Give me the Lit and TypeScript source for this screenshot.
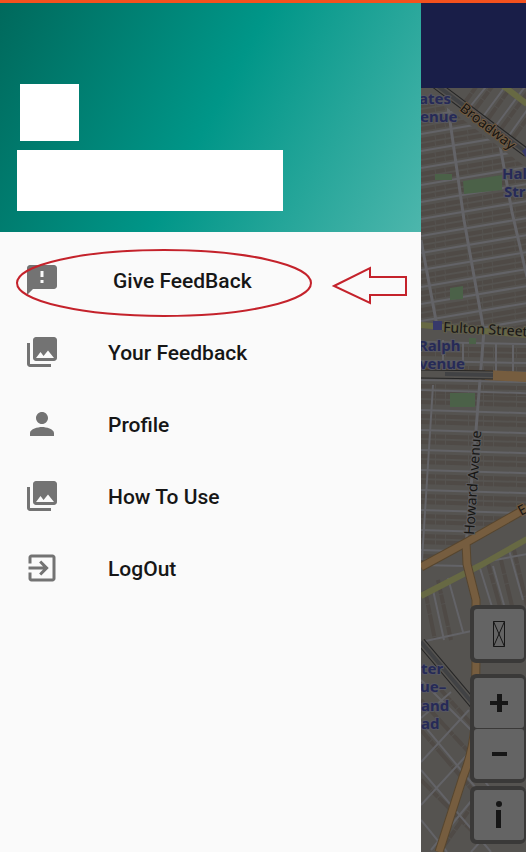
import { LitElement, html, svg, css } from "lit";
import { customElement } from "lit/decorators.js";

const icons = {
  feedback: "M20 2H4c-1.100 0-1.990.9-1.990 2L2 22l4-4h14c1.100 0 2-.9 2-2V4c0-1.100-.9-2-2-2zm-7 12h-2v-2h2v2zm0-4h-2V6h2v4z",
  gallery: "M22 16V4c0-1.100-.9-2-2-2H8c-1.100 0-2 .9-2 2v12c0 1.100.9 2 2 2h12c1.100 0 2-.9 2-2zm-11-4l2.030 2.710L16 11l4 5H8l3-4zM2 6v14c0 1.100.9 2 2 2h14v-2H4V6H2z",
  person: "M12 12c2.210 0 4-1.790 4-4s-1.790-4-4-4-4 1.790-4 4 1.790 4 4 4zm0 2c-2.670 0-8 1.340-8 4v2h16v-2c0-2.660-5.330-4-8-4z",
  exit: "M10.090 15.590L11.500 17l5-5-5-5-1.410 1.410L12.670 11H3v2h9.670l-2.580 2.590zM19 3H5c-1.110 0-2 .9-2 2v4h2V5h14v14H5v-4H3v4c0 1.100.89 2 2 2h14c1.100 0 2-.9 2-2V5c0-1.100-.9-2-2-2z",
};

const icon = (d: string) => html`<svg class="icon" viewBox="0 0 24 24" aria-hidden="true"><path d=${d} /></svg>`;

const items = [
  { label: "Your Feedback", icon: icons.gallery },
  { label: "Profile", icon: icons.person },
  { label: "How To Use", icon: icons.gallery },
  { label: "LogOut", icon: icons.exit },
];

// Rows of houses between the cross streets: start height, slope, street gap
const blocks = (top: number, bottom: number, step: number, slope: number) => {
  const out = [];
  for (let y = top; y < bottom; y += step) {
    const end = y + 106 * slope;
    out.push(svg`
      <path class="houses" d="M420 ${y + 6}L526 ${end + 6}M420 ${y + 12}L526 ${end + 12}" />
      <path class="street" d="M420 ${y}L526 ${end}" />`);
  }
  return out;
};

@customElement("street-map")
export class StreetMap extends LitElement {
  static styles = css`
    :host { display: block; overflow: hidden; background: #555350; }
    svg { display: block; width: 100%; height: 100%; }
    .land { fill: #555350; }
    .street { fill: none; stroke: #636367; stroke-width: 2; }
    .avenue { fill: none; stroke: #636367; stroke-width: 3; }
    .houses { fill: none; stroke: #4f4a46; stroke-width: 4; stroke-dasharray: 14 1 9 1 22 1; }
    .park { fill: #4b6148; }
    .orange-edge { fill: none; stroke: #57462f; stroke-width: 9; }
    .orange { fill: none; stroke: #765d3f; stroke-width: 7; }
    .wide { stroke-width: 10; }
    .green { fill: none; stroke: #676943; stroke-width: 6; }
    .rail { fill: none; stroke: #262626; stroke-width: 9; }
    .rail-fill { fill: none; stroke: #555350; stroke-width: 7; }
    .rail-core { fill: none; stroke: #414244; stroke-width: 4; }
    .station { fill: #37396a; }
    text { font-family: "Noto Sans", sans-serif; }
    .place { font-size: 15px; font-weight: 700; fill: #262a57; stroke: #57575f; stroke-width: 2; paint-order: stroke; }
    .road { font-size: 14px; fill: #171614; stroke: #605d4b; stroke-width: 2; paint-order: stroke; }
    .broadway { stroke: #715a40; }
    .howard { stroke: #5c5c5e; }
  `;

  render() {
    return html`
      <svg viewBox="420 88 106 764" preserveAspectRatio="xMinYMin slice" role="img" aria-label="Street map">
        <defs>
          <clipPath id="north"><path d="M420 88L526 168V332L420 325z" /></clipPath>
          <clipPath id="middle"><path d="M420 325L526 332V508L420 568z" /></clipPath>
          <clipPath id="corner"><path d="M448 88H526V150z" /></clipPath>
          <clipPath id="south"><path d="M420 570L526 510V852H420z" /></clipPath>
        </defs>
        <rect class="land" x="420" y="88" width="106" height="764" />
        <g clip-path="url(#north)">
          ${blocks(100, 350, 17, -0.17)}
          <path class="avenue" d="M446 100L463 220L483 332M498 140L511 212L526 277M420 240L436 326" />
        </g>
        <g clip-path="url(#middle)">
          ${blocks(342, 390, 19, 0.02)}
          ${blocks(390, 570, 20, 0.03)}
          <path class="street" d="M442 340V372M462 342V374M495 343V374M512 345V376M432 385L421 560" />
          <path class="avenue" d="M483 330L475 430L465 545" />
        </g>
        <g clip-path="url(#corner)">
          <path class="houses" d="M462 105L480 80M473 111L496 80M487 119L515 80M500 129L530 88M512 138L540 100" />
          <path class="street" d="M468 108L492 78M481 118L509 80M494 127L526 84M507 137L536 96" />
        </g>
        <g clip-path="url(#south)">
          <path class="houses" d="M424 590L434 640M437 580L450 640M486 560L500 610M500 560L512 610M513 550L526 605M420 700L475 760M440 690L480 735M420 730L480 800M420 780L475 835M440 850L475 800M485 840L526 800" />
          <path class="street" d="M420 642L475 630M432 590L443 640M447 578L462 632M478 565L492 610M492 566L505 612M508 550L522 600M420 565L462 566M483 562L526 554M420 680L475 735M420 722L485 800M420 770L490 852M420 820L446 852M420 718L450 692M420 762L468 710M420 805L475 745M430 850L475 795M470 852L526 790M475 770L526 836" />
        </g>
        <rect class="park" x="434" y="174" width="17" height="6" />
        <path class="park" d="M462 181L501 175V190L463 194z" />
        <path class="park" d="M449 288L462 286V299L449 300zM449 393H474V407H449zM468 338H475V344H468z" />
        <path class="green" d="M500 84L526 104M420 325L526 335M420 596L480 565L526 539" />
        <path class="orange-edge" d="M420 567L466 542L526 508M465 542L466 564L475 600V660L474 725Q472 752 462 777L438 852M420 372L526 377" />
        <path class="orange" d="M420 567L466 542L526 508M465 542L466 564L475 600V660L474 725Q472 752 462 777L438 852" />
        <path class="orange wide" d="M484 375L526 377" />
        <path class="rail" d="M434 84L526 153M420 642L484 718M420 374L492 375" />
        <path class="rail-fill" d="M434 84L526 153M420 642L484 718M420 374L492 375" />
        <path class="rail-core" d="M434 84L526 153M420 642L484 718M444 374L492 375" />
        <rect class="station" x="432" y="321" width="9" height="9" />
        <path class="station" d="M521 151L526 147V159z" />
        <text class="place" x="418" y="104">ates</text>
        <text class="place" x="419" y="122">enue</text>
        <text class="place" x="501" y="179">Hal</text>
        <text class="place" x="503" y="197">Str</text>
        <text class="place" x="417" y="351">Ralph</text>
        <text class="place" x="418" y="369">venue</text>
        <text class="place" x="420" y="674">ter</text>
        <text class="place" x="419" y="692">ue–</text>
        <text class="place" x="420" y="711">and</text>
        <text class="place" x="420" y="729">ad</text>
        <text class="road broadway" transform="translate(458 110) rotate(38)">Broadway</text>
        <text class="road" transform="translate(442 332) rotate(3)">Fulton Street</text>
        <text class="road howard" transform="translate(473 535) rotate(-86)">Howard Avenue</text>
        <text class="road broadway" transform="translate(520 516) rotate(-28)">E</text>
      </svg>
    `;
  }
}

@customElement("app-root")
export class AppRoot extends LitElement {
  static styles = css`
    :host {
      display: flex; flex-direction: column; min-height: 100vh;
      border-top: 3px solid #f4511e; box-sizing: border-box;
      font-family: Roboto, sans-serif; background: #555350;
    }
    .screen { flex: 1; display: grid; grid-template-columns: 4fr 1fr; }
    .drawer { background: #fafafa; }
    .account {
      box-sizing: border-box; height: 229px; padding: 81px 20px 0;
      background: linear-gradient(118deg, #00695c 0%, #009688 50%, #4db6ac 100%);
    }
    .avatar { width: 59px; height: 57px; background: #fff; }
    .name { width: 266px; height: 61px; margin: 9px 0 0 -3px; background: #fff; }
    nav { position: relative; padding-top: 12px; }
    .item {
      display: flex; align-items: center; gap: 48px; width: 100%; height: 72px;
      padding: 0 24px; border: 0; background: none; text-align: left;
      font: 500 21px Roboto, sans-serif; color: #161616;
    }
    .item span { padding-top: 2px; }
    .first { gap: 53px; }
    .icon { width: 36px; height: 36px; fill: #737373; flex: none; }
    .marks { position: absolute; left: 0; top: 0; width: 420px; height: 100px; pointer-events: none; }
    .marks * { fill: none; stroke: #c4222b; stroke-width: 2; }
    .behind { display: flex; flex-direction: column; min-width: 0; position: relative; }
    .bar { height: 85px; background: #191e48; }
    .map { flex: 1 0 0; min-height: 0; }
    .controls {
      position: absolute; right: 0; bottom: 8px; width: 56px;
      display: flex; flex-direction: column;
    }
    .group { border: 4px solid #3a3938; border-right-width: 2px; border-radius: 6px; background: #3a3938; }
    .group + .group { margin-top: 3px; }
    .group.locate { margin-bottom: 8px; }
    .key {
      display: flex; align-items: center; justify-content: center; width: 100%; height: 50px;
      padding: 0; border: 0; border-radius: 3px; background: #646464;
    }
    .key + .key { margin-top: 1px; }
    .key svg { width: 30px; height: 36px; fill: #161616; }
    .key .line { fill: none; stroke: #161616; stroke-width: 1; }
  `;

  render() {
    return html`
      <div class="screen">
        <aside class="drawer">
          <header class="account">
            <div class="avatar"></div>
            <div class="name"></div>
          </header>
          <nav aria-label="Main menu">
            <button class="item first">${icon(icons.feedback)}<span>Give FeedBack</span></button>
            ${items.map((i) => html`<button class="item">${icon(i.icon)}<span>${i.label}</span></button>`)}
            <svg class="marks" viewBox="0 0 420 100" aria-hidden="true">
              <ellipse cx="164" cy="51" rx="147" ry="33" />
              <path d="M334 54L370 36V45H406V63H370V71z" />
            </svg>
          </nav>
        </aside>
        <main class="behind">
          <div class="bar"></div>
          <street-map class="map"></street-map>
          <div class="controls">
            <div class="group locate">
              <button class="key" aria-label="Locate me">
                <svg viewBox="0 0 30 36"><path class="line" d="M9.500 5.500H20.500V30.500H9.500zL20.500 30.500M20.500 5.500L9.500 30.500" /></svg>
              </button>
            </div>
            <div class="group">
              <button class="key" aria-label="Zoom in">
                <svg viewBox="0 0 30 36"><path d="M13 9h5v7h6v4h-6v7h-5v-7H6v-4h7z" /></svg>
              </button>
              <button class="key" aria-label="Zoom out">
                <svg viewBox="0 0 30 36"><path d="M8 16h15v4H8z" /></svg>
              </button>
            </div>
            <div class="group">
              <button class="key" aria-label="Information">
                <svg viewBox="0 0 30 36"><circle cx="15" cy="7" r="3" /><path d="M12 13h5v18h-5z" /></svg>
              </button>
            </div>
          </div>
        </main>
      </div>
    `;
  }
}
